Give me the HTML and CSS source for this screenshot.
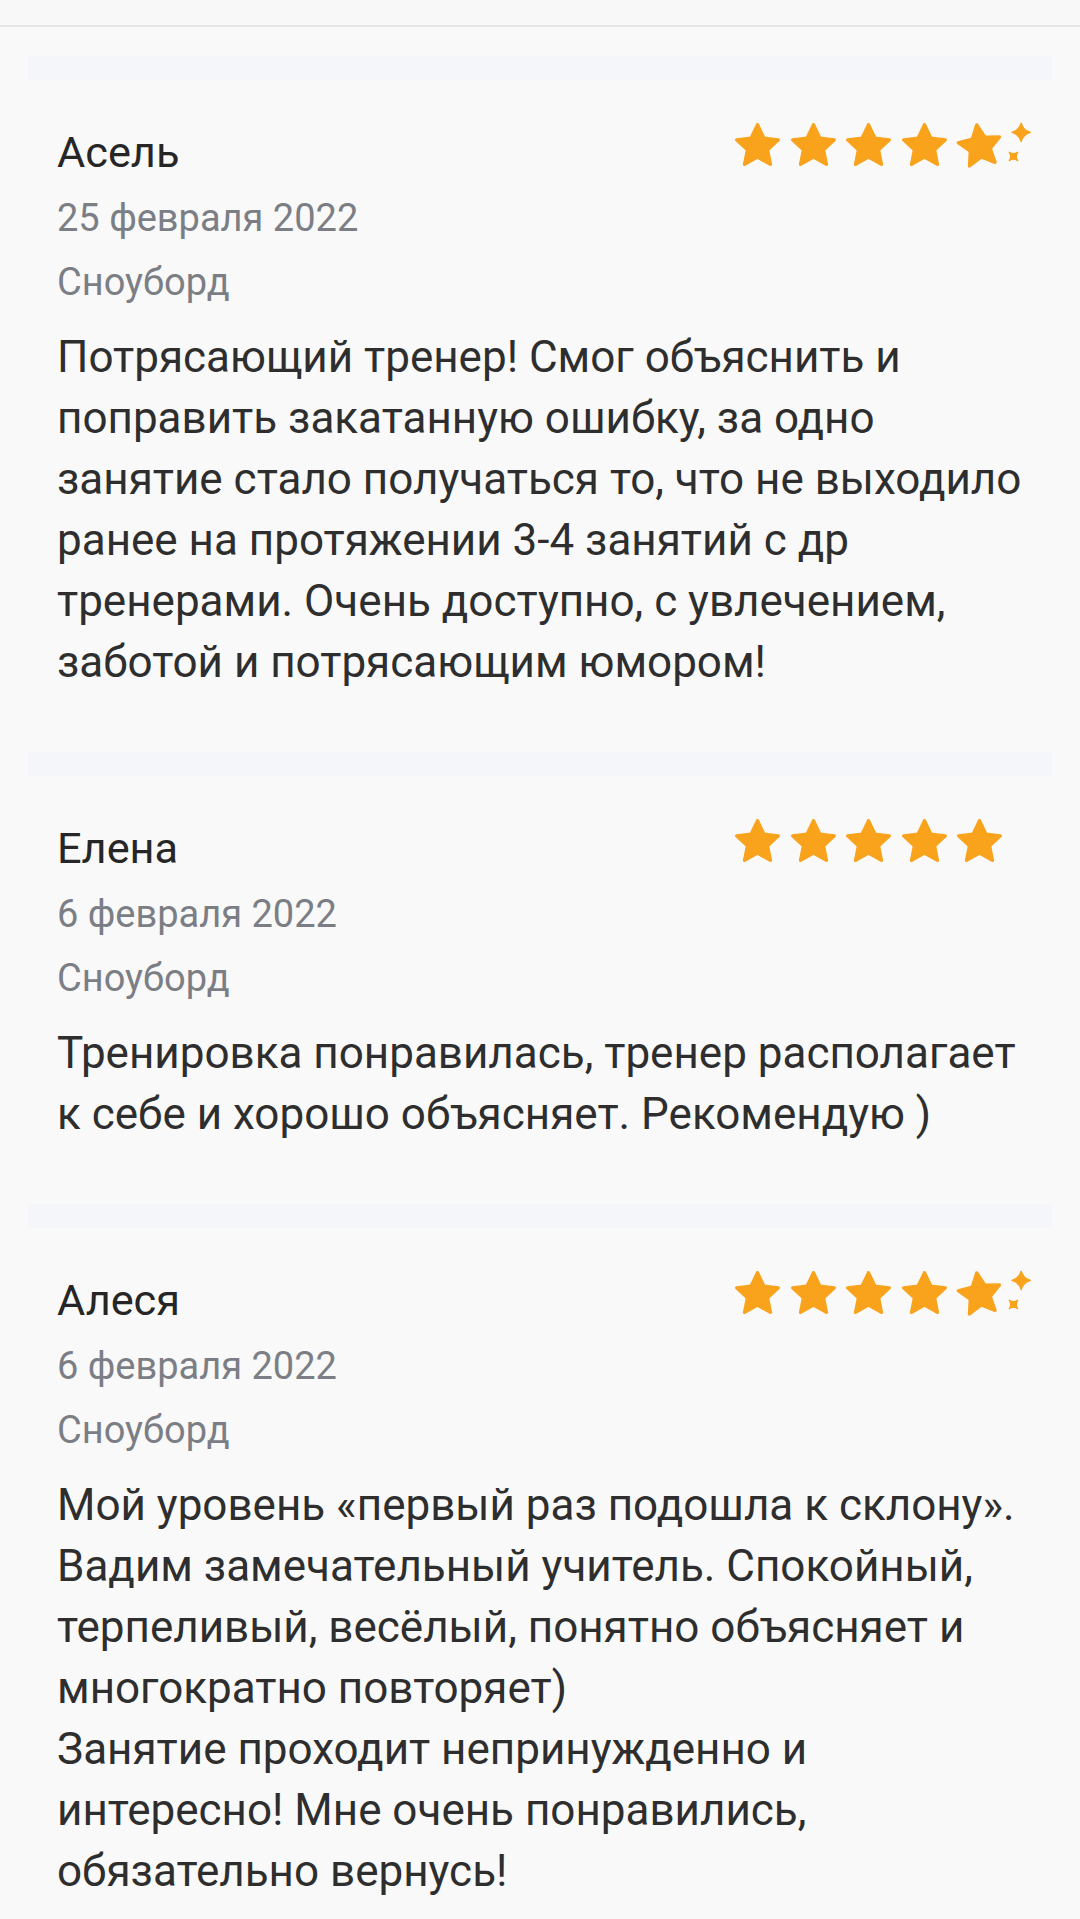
FILE: index.html
```html
<!DOCTYPE html>
<html lang="ru">
<head>
<meta charset="utf-8">
<title>Отзывы</title>
<link rel="stylesheet" href="styles.css">
</head>
<body>
<div class="topbar"></div>
<main class="list">
  <article class="review">
    <div class="sep"></div>
    <div class="content">
      <div class="head">
        <span class="name">Асель</span>
        <div class="stars">
          <svg class="star" viewBox="1.75 1.75 20.5 19.6"><path d="M12 2.5l2.9 6.1 6.6.8-4.9 4.6 1.3 6.6L12 17.3l-5.9 3.3 1.3-6.6L2.5 9.4l6.6-.8z"/></svg>
          <svg class="star" viewBox="1.75 1.75 20.5 19.6"><path d="M12 2.5l2.9 6.1 6.6.8-4.9 4.6 1.3 6.6L12 17.3l-5.9 3.3 1.3-6.6L2.5 9.4l6.6-.8z"/></svg>
          <svg class="star" viewBox="1.75 1.75 20.5 19.6"><path d="M12 2.5l2.9 6.1 6.6.8-4.9 4.6 1.3 6.6L12 17.3l-5.9 3.3 1.3-6.6L2.5 9.4l6.6-.8z"/></svg>
          <svg class="star" viewBox="1.75 1.75 20.5 19.6"><path d="M12 2.5l2.9 6.1 6.6.8-4.9 4.6 1.3 6.6L12 17.3l-5.9 3.3 1.3-6.6L2.5 9.4l6.6-.8z"/></svg>
          <svg class="star sparkly" viewBox="1.75 1.75 20.5 19.6" overflow="visible"><path transform="rotate(-8 12 11.5)" d="M12 2.5l2.9 6.1 6.6.8-4.9 4.6 1.3 6.6L12 17.3l-5.9 3.3 1.3-6.6L2.5 9.4l6.6-.8z"/><path class="spark" d="M31 1.8Q31.9 5.1 35.2 6 31.9 6.9 31 10.2 30.1 6.9 26.8 6 30.1 5.1 31 1.8z"/><path class="spark" d="M25.6 15.1Q27.5 16.4 29.4 15.1 28.1 17 29.4 18.9 27.5 17.6 25.6 18.9 26.9 17 25.6 15.1z"/></svg>
        </div>
      </div>
      <div class="date">25 февраля 2022</div>
      <div class="cat">Сноуборд</div>
      <p class="text">Потрясающий тренер! Смог объяснить и поправить закатанную ошибку, за одно занятие стало получаться то, что не выходило ранее на протяжении 3-4 занятий с др тренерами. Очень доступно, с увлечением, заботой и потрясающим юмором!</p>
    </div>
  </article>

  <article class="review">
    <div class="sep"></div>
    <div class="content">
      <div class="head">
        <span class="name">Елена</span>
        <div class="stars">
          <svg class="star" viewBox="1.75 1.75 20.5 19.6"><path d="M12 2.5l2.9 6.1 6.6.8-4.9 4.6 1.3 6.6L12 17.3l-5.9 3.3 1.3-6.6L2.5 9.4l6.6-.8z"/></svg>
          <svg class="star" viewBox="1.75 1.75 20.5 19.6"><path d="M12 2.5l2.9 6.1 6.6.8-4.9 4.6 1.3 6.6L12 17.3l-5.9 3.3 1.3-6.6L2.5 9.4l6.6-.8z"/></svg>
          <svg class="star" viewBox="1.75 1.75 20.5 19.6"><path d="M12 2.5l2.9 6.1 6.6.8-4.9 4.6 1.3 6.6L12 17.3l-5.9 3.3 1.3-6.6L2.5 9.4l6.6-.8z"/></svg>
          <svg class="star" viewBox="1.75 1.75 20.5 19.6"><path d="M12 2.5l2.9 6.1 6.6.8-4.9 4.6 1.3 6.6L12 17.3l-5.9 3.3 1.3-6.6L2.5 9.4l6.6-.8z"/></svg>
          <svg class="star" viewBox="1.75 1.75 20.5 19.6"><path d="M12 2.5l2.9 6.1 6.6.8-4.9 4.6 1.3 6.6L12 17.3l-5.9 3.3 1.3-6.6L2.5 9.4l6.6-.8z"/></svg>
        </div>
      </div>
      <div class="date">6 февраля 2022</div>
      <div class="cat">Сноуборд</div>
      <p class="text">Тренировка понравилась, тренер располагает к себе и хорошо объясняет. Рекомендую )</p>
    </div>
  </article>

  <article class="review">
    <div class="sep"></div>
    <div class="content">
      <div class="head">
        <span class="name">Алеся</span>
        <div class="stars">
          <svg class="star" viewBox="1.75 1.75 20.5 19.6"><path d="M12 2.5l2.9 6.1 6.6.8-4.9 4.6 1.3 6.6L12 17.3l-5.9 3.3 1.3-6.6L2.5 9.4l6.6-.8z"/></svg>
          <svg class="star" viewBox="1.75 1.75 20.5 19.6"><path d="M12 2.5l2.9 6.1 6.6.8-4.9 4.6 1.3 6.6L12 17.3l-5.9 3.3 1.3-6.6L2.5 9.4l6.6-.8z"/></svg>
          <svg class="star" viewBox="1.75 1.75 20.5 19.6"><path d="M12 2.5l2.9 6.1 6.6.8-4.9 4.6 1.3 6.6L12 17.3l-5.9 3.3 1.3-6.6L2.5 9.4l6.6-.8z"/></svg>
          <svg class="star" viewBox="1.75 1.75 20.5 19.6"><path d="M12 2.5l2.9 6.1 6.6.8-4.9 4.6 1.3 6.6L12 17.3l-5.9 3.3 1.3-6.6L2.5 9.4l6.6-.8z"/></svg>
          <svg class="star sparkly" viewBox="1.75 1.75 20.5 19.6" overflow="visible"><path transform="rotate(-8 12 11.5)" d="M12 2.5l2.9 6.1 6.6.8-4.9 4.6 1.3 6.6L12 17.3l-5.9 3.3 1.3-6.6L2.5 9.4l6.6-.8z"/><path class="spark" d="M31 1.8Q31.9 5.1 35.2 6 31.9 6.9 31 10.2 30.1 6.9 26.8 6 30.1 5.1 31 1.8z"/><path class="spark" d="M25.6 15.1Q27.5 16.4 29.4 15.1 28.1 17 29.4 18.9 27.5 17.6 25.6 18.9 26.9 17 25.6 15.1z"/></svg>
        </div>
      </div>
      <div class="date">6 февраля 2022</div>
      <div class="cat">Сноуборд</div>
      <p class="text">Мой уровень «первый раз подошла к склону». Вадим замечательный учитель. Спокойный, терпеливый, весёлый, понятно объясняет и многократно повторяет)<br>Занятие проходит непринужденно и интересно! Мне очень понравились, обязательно вернусь!</p>
    </div>
  </article>
  <div class="sep"></div>
</main>
</body>
</html>
```

FILE: styles.css
```css
html, body {
  margin: 0;
  padding: 0;
}
body {
  background: #f9f9f9;
  font-family: Roboto, "Noto Sans", "Liberation Sans", sans-serif;
  color: #2e2e2e;
  width: 1080px;
  overflow: hidden;
}
.topbar {
  height: 25px;
  background: #f8f8f8;
  border-bottom: 2px solid #e6e6e6;
}
.list {
  padding-top: 29px;
}
.sep {
  height: 24px;
  margin: 0 28px;
  background: #f4f6f9;
}
.content {
  padding: 40px 52px 59px 57px;
}
.head {
  display: flex;
  justify-content: space-between;
  align-items: flex-start;
  height: 66px;
}
.name {
  font-size: 43.3px;
  line-height: 66px;
  color: #262626;
}
.stars {
  display: flex;
  gap: 10.5px;
  margin-top: 3px;
  margin-right: 26px;
}
.star {
  width: 45px;
  height: 43px;
  display: block;
}
.star path {
  fill: #f8a31b;
  stroke: #f8a31b;
  stroke-width: 1.5;
  stroke-linejoin: round;
}
.star .spark {
  stroke-width: 0.6;
}
.date, .cat {
  font-size: 38px;
  line-height: 64px;
  color: #7b7e85;
}
.text {
  margin: 13px 0 0 0;
  font-size: 44px;
  line-height: 61px;
  color: #2e2e2e;
}
```
